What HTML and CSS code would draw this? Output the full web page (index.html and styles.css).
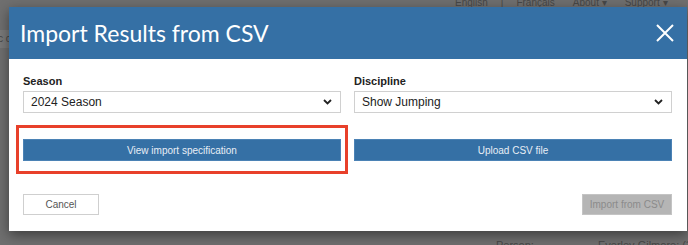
FILE: index.html
```html
<!DOCTYPE html>
<html lang="en">
<head>
    <meta charset="UTF-8">
    <meta name="viewport" content="width=device-width, initial-scale=1.0">
    <title>Import Results from CSV</title>
    <link rel="stylesheet" href="styles.css">
</head>
<body>

<!-- Pagina dietro al modale -->
<div class="page">
    <div class="top-nav">
        <span>English</span>
        <span class="sep">|</span>
        <span>Français</span>
        <span class="menu">About &#9662;</span>
        <span class="menu">Support &#9662;</span>
    </div>
    <div class="side-tab">c o</div>
    <div class="page-row">
        <span class="person-label">Person:</span>
        <span>Everley Gilmore: (3</span>
    </div>
</div>

<!-- Modale import -->
<div class="modal">
    <div class="modal-header">
        <h1>Import Results from CSV</h1>
        <button class="close-button" aria-label="Close">
            <svg width="18" height="18" viewBox="0 0 18 18">
                <path d="M1 1 L17 17 M17 1 L1 17" stroke="#fff" stroke-width="2" fill="none"/>
            </svg>
        </button>
    </div>

    <div class="modal-body">
        <div class="field">
            <label>Season</label>
            <div class="select">
                <span>2024 Season</span>
                <svg width="9" height="6" viewBox="0 0 9 6">
                    <path d="M1 1 L4.5 4.5 L8 1" stroke="#222" stroke-width="1.8" fill="none"/>
                </svg>
            </div>
        </div>
        <div class="field">
            <label>Discipline</label>
            <div class="select">
                <span>Show Jumping</span>
                <svg width="9" height="6" viewBox="0 0 9 6">
                    <path d="M1 1 L4.5 4.5 L8 1" stroke="#222" stroke-width="1.8" fill="none"/>
                </svg>
            </div>
        </div>

        <div class="action">
            <div class="highlight"></div>
            <button class="blue-button">View import specification</button>
        </div>
        <div class="action">
            <button class="blue-button">Upload CSV file</button>
        </div>
    </div>

    <div class="modal-footer">
        <button class="cancel-button">Cancel</button>
        <button class="import-button" disabled>Import from CSV</button>
    </div>
</div>

</body>
</html>
```

FILE: styles.css
```css
/* Pagina di sfondo oscurata */
body {
    font-family: "Liberation Sans", Arial, sans-serif;
    background-color: #6f6f6f;
    margin: 0;
    padding: 0;
    width: 688px;
    height: 245px;
    overflow: hidden;
    position: relative;
}

.page {
    height: 245px;
    display: flex;
    flex-direction: column;
    color: #474747;
    font-size: 12px;
}

.top-nav {
    display: flex;
    gap: 13px;
    padding-left: 455px;
    margin-top: -3px;
    height: 33px;
    font-size: 10px;
}

.top-nav .menu {
    margin-left: 5px;
}

.side-tab {
    width: 9px;
    height: 18px;
    line-height: 18px;
    background-color: #7a7a7a;
    overflow: hidden;
    white-space: nowrap;
    font-size: 10px;
    text-indent: -2px;
}

.page-row {
    margin-top: auto;
    display: flex;
    padding-left: 496px;
    gap: 64px;
    height: 10px;
    line-height: 20px;
    font-size: 11px;
    overflow: hidden;
    white-space: nowrap;
}

/* Modale */
.modal {
    position: absolute;
    left: 9px;
    top: 7px;
    width: 678px;
    height: 224px;
    background-color: #fff;
    box-shadow: 0 4px 12px rgba(0, 0, 0, 0.45);
    display: flex;
    flex-direction: column;
}

.modal-header {
    background-color: #3570a5;
    height: 52px;
    display: flex;
    align-items: center;
    justify-content: space-between;
    padding: 0 13px 0 11px;
}

.modal-header h1 {
    font-family: Lato, "Noto Sans", sans-serif;
    font-weight: normal;
    font-size: 23px;
    color: #fff;
    margin: 0;
    padding-bottom: 1px;
}

.close-button {
    background: none;
    border: none;
    padding: 0;
    width: 18px;
    height: 18px;
    cursor: pointer;
}

.modal-body {
    display: grid;
    grid-template-columns: 318px 318px;
    column-gap: 13px;
    padding: 16px 15px 0 14px;
}

.field label {
    display: block;
    font-size: 11px;
    font-weight: bold;
    color: #222;
    height: 16px;
}

.select {
    height: 20px;
    border: 1px solid #d0d0d0;
    display: flex;
    align-items: center;
    justify-content: space-between;
    padding: 0 8px 0 7px;
    font-size: 12px;
    color: #222;
}

.action {
    position: relative;
    margin-top: 26px;
}

.highlight {
    position: absolute;
    left: -7px;
    right: -7px;
    top: -14px;
    bottom: -13px;
    border: 3px solid #e8402a;
}

.blue-button {
    display: block;
    width: 100%;
    height: 22px;
    background-color: #3570a5;
    border: 1px solid #4b82b5;
    color: #e8eef5;
    font-family: "Liberation Sans", Arial, sans-serif;
    font-size: 10px;
    cursor: pointer;
    position: relative;
}

.modal-footer {
    display: flex;
    justify-content: space-between;
    padding: 33px 15px 0 14px;
}

.cancel-button {
    width: 76px;
    height: 21px;
    background-color: #fff;
    border: 1px solid #cfcfcf;
    color: #555;
    font-family: "Liberation Sans", Arial, sans-serif;
    font-size: 10px;
    cursor: pointer;
}

.import-button {
    width: 90px;
    height: 21px;
    background-color: #b5b5b5;
    border: 1px solid #c4c4c4;
    color: #8b8b8b;
    font-family: "Liberation Sans", Arial, sans-serif;
    font-size: 10px;
}
```
